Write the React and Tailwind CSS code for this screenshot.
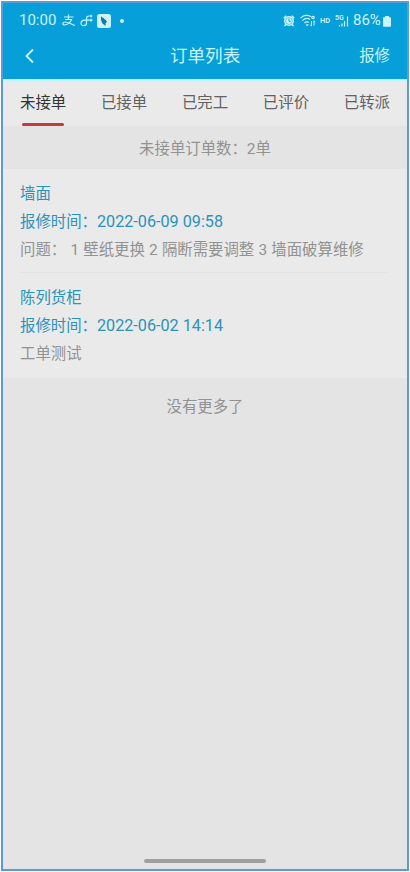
import { useState } from 'react';

const tabs = ['未接单', '已接单', '已完工', '已评价', '已转派'];

const orders = [
  { id: 1, title: '墙面', time: '2022-06-09 09:58', desc: '问题： 1 壁纸更换 2 隔断需要调整 3 墙面破算维修' },
  { id: 2, title: '陈列货柜', time: '2022-06-02 14:14', desc: '工单测试' },
];

const StatusBar = () => (
  <div className="flex h-[35px] items-center justify-between pl-[16px] pr-[16px] text-[#c8f4fc]">
    <div className="flex items-center">
      <span className="w-[38px] whitespace-nowrap text-[15px] leading-none">10:00</span>
      <svg className="ml-[5px]" width="14" height="13" viewBox="0 0 14 13" fill="none" stroke="currentColor" strokeWidth="1.2">
        <path d="M2 3h9.500M6.500.5v5M3 5.500h6.500C8.500 8.500 5.500 11 2.500 11 .2 11 .3 8 3 8c3 0 6 2 10 3.500" />
      </svg>
      <svg className="ml-[4px]" width="13" height="13" viewBox="0 0 13 13" fill="none" stroke="currentColor" strokeWidth="1.2">
        <path d="M12.500 2H9C7 2 6.500 3.500 6.500 5v4c0 3.700-5.500 3.500-5.500.3C1 7 3 6.200 5 6.200h7.500M11 4.700v3M11 .7v2.600" />
      </svg>
      <svg className="ml-[4px]" width="14" height="14" viewBox="0 0 14 14">
        <rect width="14" height="14" rx="2.500" fill="currentColor" />
        <path d="M4 2c.5 1.200 1.500 1.500 2.500 2L10 7.500 8.500 9.500v2.500L5.500 9.500 4 6z" fill="#23729b" />
      </svg>
      <span className="ml-[9px] size-1 rounded-full bg-[#c8f4fc]" />
    </div>
    <div className="flex items-center">
      <svg width="12" height="12" viewBox="0 0 12 12">
        <path d="M.8 3.200 3.200.8M11.200 3.200 8.800.8M1.500 11l2-2M10.500 11l-2-2" stroke="currentColor" strokeWidth="1.500" />
        <circle cx="6" cy="6" r="5" fill="currentColor" />
        <circle cx="6" cy="6" r="3.400" fill="none" stroke="#079fd9" strokeWidth=".5" />
        <path d="M6 3.800V6.300h1.800" fill="none" stroke="#079fd9" strokeWidth="1" />
      </svg>
      <svg className="ml-[5px]" width="16" height="13" viewBox="0 0 16 13" fill="none" stroke="currentColor" strokeWidth="1.200">
        <path d="M.5 4.200C3.500.8 8 .8 11 2.700M2.500 6.700C4.800 4.200 8 4.200 10 5.500M4.500 9c1.500-1.500 3-1.500 4.500-.7" />
        <path d="M6 10.500h2.500L7.200 12.200z" fill="currentColor" strokeWidth=".3" />
        <circle cx="13" cy="3.500" r="1.200" />
        <path d="M11.500 7v5M10.300 10.800l1.200 1.400M14 11.500V6.800l1.200 1.400" strokeWidth="1" />
      </svg>
      <span className="ml-[4px] w-[13px] text-[7.500px] font-semibold leading-none">HD</span>
      <span className="ml-[2px] flex h-[13px] w-[14px]">
        <svg width="14" height="13" viewBox="0 0 14 13">
          <text x="0" y="6" fontSize="7" fontWeight="600" fill="currentColor">5G</text>
          <path d="M4.500 12.500V11M7 12.500V9.500M9.500 12.500V7M12.500 12.500V2.500" stroke="currentColor" strokeWidth="1.200" />
        </svg>
      </span>
      <span className="ml-[4px] w-[30px] whitespace-nowrap text-[15px] leading-none">86%</span>
      <svg className="mt-px" width="8" height="11" viewBox="0 0 8 11" fill="currentColor">
        <path d="M2 0h4v1.200H7.200q.8 0 .8.8V10q0 .8-.8.8H.8q-.8 0-.8-.8V2q0-.8.8-.8H2z" />
      </svg>
    </div>
  </div>
);

const OrderItem = ({ order, last }) => (
  <div className={last ? 'pt-[11px] pb-[10px]' : 'border-b border-[#e3e3e3] pt-[11px] pb-[8px]'}>
    <div className="text-[#2a93b9]">{order.title}</div>
    <div className="text-[#2a93b9]">报修时间：<span className="text-[16.200px]">{order.time}</span></div>
    <div className="whitespace-nowrap text-[#929292] [word-spacing:0.4px]">{order.desc}</div>
  </div>
);

const App = () => {
  const [active, setActive] = useState(0);

  return (
    <div className="h-[872px] w-[410px] bg-white p-px font-[Roboto,'Noto_Sans_CJK_SC',sans-serif] text-[15.400px]">
      <div className="flex h-[870px] w-[408px] flex-col border-2 border-[#5b9bd5] bg-[#e4e4e4]">
        <header className="h-[76px] bg-[#079fd9] text-[#c8f4fc]">
          <StatusBar />
          <div className="flex h-[36px] items-center justify-between pl-[21px] pr-[17px]">
            <svg width="27" height="16" viewBox="0 0 27 16" fill="none" stroke="currentColor" strokeWidth="1.800">
              <path d="M9 1.500 2.500 8 9 14.500" />
            </svg>
            <h1 className="text-[17.600px]">订单列表</h1>
            <button className="pt-px">报修</button>
          </div>
        </header>

        <nav className="flex h-[47px] justify-between border-t-2 border-[#c4f4fc] bg-[#eaeaea] px-[17px]">
          {tabs.map((tab, i) => (
            <button
              key={tab}
              onClick={() => setActive(i)}
              className={`flex flex-col items-center whitespace-nowrap pt-[8px] leading-[28px] ${active === i ? 'text-[#333]' : 'text-[#626262]'}`}
            >
              {tab}
              {active === i && <span className="mt-[6px] h-[3px] w-[42px] rounded-full bg-[#c23b3e]" />}
            </button>
          ))}
        </nav>

        <div className="h-[43px] text-center leading-[46px] text-[#929292]">未接单订单数：2单</div>

        <main className="bg-[#eaeaea] px-[17px] leading-[28px]">
          {orders.map((order, i) => (
            <OrderItem key={order.id} order={order} last={i === orders.length - 1} />
          ))}
        </main>

        <div className="pt-[15px] text-center leading-[28px] text-[#929292]">没有更多了</div>
        <div className="mx-auto mt-auto mb-[6px] h-[4px] w-[122px] rounded-full bg-[#a0a0a0]" />
      </div>
    </div>
  );
};

export default App;
